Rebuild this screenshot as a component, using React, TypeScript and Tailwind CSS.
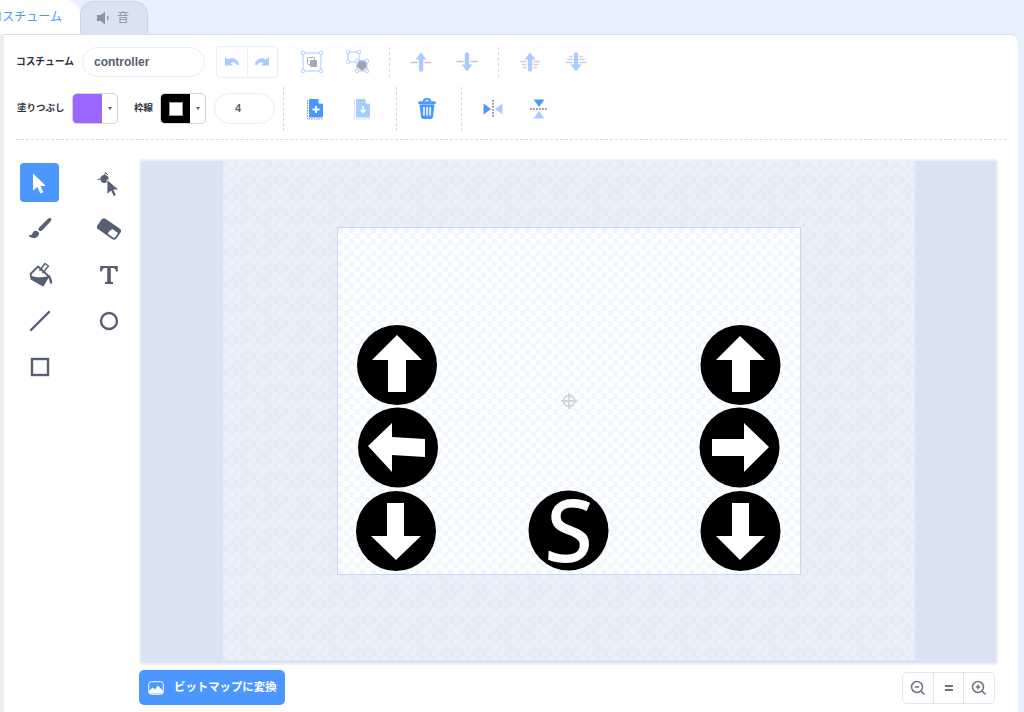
import React from 'react';

const jp = 'font-["Liberation_Sans","Noto_Sans_CJK_JP",sans-serif]';
const LIGHT = '#a9ccff';
const BLUE = '#4c97ff';
const GRAY = '#575e75';

const Cell: React.FC<{ children: React.ReactNode }> = ({ children }) => (
  <div className="w-[46px] h-[30px] flex items-center justify-center shrink-0">{children}</div>
);

const Divider: React.FC<{ tall?: boolean; className?: string }> = ({ tall, className }) => (
  <div className={`w-0 border-l border-dashed border-[#d9d9d9] shrink-0 ${tall ? 'h-[44px]' : 'h-[30px]'} ${className ?? ''}`} />
);

const Ico: React.FC<{ size?: number; children: React.ReactNode }> = ({ size = 24, children }) => (
  <svg width={size} height={size} viewBox="0 0 24 24" fill="none">{children}</svg>
);

const Handles: React.FC<{ pts: number[][] }> = ({ pts }) => (
  <>
    {pts.map(([x, y]) => (
      <rect key={`${x}-${y}`} x={x - 1.6} y={y - 1.6} width="3.2" height="3.2" rx="1" fill="#fff" stroke={LIGHT} strokeWidth="1" />
    ))}
  </>
);

const GroupIcon = () => (
  <Ico>
    <rect x="3" y="3" width="18" height="18" fill="none" stroke={LIGHT} strokeWidth="1" />
    <rect x="7.500" y="7.500" width="7" height="7" rx="1" fill="none" stroke="#a8abb6" strokeWidth="1" />
    <rect x="10" y="10" width="7" height="7" rx="1" fill="#a8abb6" />
    <Handles pts={[[3, 3], [21, 3], [3, 21], [21, 21]]} />
  </Ico>
);

const UngroupIcon = () => (
  <Ico>
    <rect x="2" y="2" width="11" height="10" fill="none" stroke={LIGHT} strokeWidth="1" />
    <path d="M10 16 14 10 20 11 21 17 16 21z" fill="#a0a3af" />
    <path d="M11 11h10v10H11z" fill="none" stroke={LIGHT} strokeWidth="1" />
    <Handles pts={[[2, 2], [13, 2], [2, 12], [11, 11], [21, 11], [11, 21], [21, 21]]} />
  </Ico>
);

const ArrowV: React.FC<{ down?: boolean; bars?: boolean }> = ({ down, bars }) => (
  <Ico>
    <g transform={down ? 'rotate(180 12 12)' : undefined}>
      {bars ? (
        <path d="M2 11.500h6.500M15.500 11.500h6.500M3.500 14.500h5M15.500 14.500h5M5 17.500h3.500M15.500 17.500h3.500" stroke="#cdcfd6" strokeWidth="1.300" />
      ) : (
        <path d="M1.500 12.500h7M15.500 12.500h7" stroke="#c4c6ce" strokeWidth="1.500" />
      )}
      <path d="M12 2.500 17.500 9.500h-3.300v10a2.200 2.200 0 0 1-4.400 0v-10H6.500z" fill={LIGHT} />
    </g>
  </Ico>
);

const FileIcon: React.FC<{ light?: boolean }> = ({ light }) => (
  <Ico>
    <path d="M4.500 3v19h15" stroke="#8e919e" strokeWidth="1" strokeDasharray="1.500 1" opacity={light ? 0.45 : 1} />
    <path d="M6 2h9.500L20 6.500v12.500a1.500 1.500 0 0 1-1.500 1.500H6z" fill={light ? LIGHT : BLUE} />
    <path d="M16 2v4.200h4.200" fill="#fff" stroke="#fff" strokeWidth="0.800" />
    {light ? (
      <path d="M13 9v6.500M10.500 13l2.500 2.500 2.500-2.500" stroke="#fff" strokeWidth="1.500" />
    ) : (
      <path d="M13 9v7M9.500 12.500h7" stroke="#fff" strokeWidth="1.800" />
    )}
  </Ico>
);

const TrashIcon = () => (
  <Ico>
    <path d="M8.500 4.500C8.500 2.500 10 2 12 2s3.500.5 3.500 2.500" stroke={BLUE} strokeWidth="1.800" />
    <rect x="3" y="4.200" width="18" height="3" rx="1.500" fill={BLUE} />
    <path d="M4.500 7.500h15L18 20a2.500 2.500 0 0 1-2.500 2h-7A2.500 2.500 0 0 1 6 20z" fill={BLUE} />
    <path d="M9 10v8.500M12 10v8.500M15 10v8.500" stroke="#fff" strokeWidth="1.500" />
  </Ico>
);

const FlipH = () => (
  <Ico>
    <path d="M12 3v18" stroke="#9a9da9" strokeWidth="2" strokeDasharray="1.800 1.200" />
    <path d="M2.500 6.500 10 12l-7.500 5.500z" fill={BLUE} />
    <path d="M21.500 6.500 14 12l7.500 5.500z" fill={LIGHT} />
  </Ico>
);

const FlipV = () => (
  <Ico>
    <path d="M3 12h18" stroke="#9a9da9" strokeWidth="2" strokeDasharray="1.800 1.200" />
    <path d="M6.500 2.500 12 10l5.500-7.500z" fill={BLUE} />
    <path d="M6.500 21.500 12 14l5.500 7.500z" fill={LIGHT} />
  </Ico>
);

const tools: React.ReactNode[] = [
  <svg key="select" width="22" height="24" viewBox="0 0 22 24"><path d="M4 2.500v17l4.300-3.500 3 6.500 3-1.300-2.900-6.300H17z" fill="#fff" /></svg>,
  <svg key="reshape" width="26" height="30" viewBox="0 0 26 30">
    <path d="M1.500 11.500 7 10.500 9.500 4.500 12 7" stroke={GRAY} strokeWidth="1" fill="none" />
    <circle cx="8.500" cy="11" r="4" fill={GRAY} />
    <path d="M11 11.500v15l4-3.500 2.600 5.500 2.700-1.200-2.500-5.400H23z" fill={GRAY} stroke="#fff" strokeWidth="0.800" />
  </svg>,
  <svg key="brush" width="26" height="26" viewBox="0 0 26 26">
    <path d="M24 2.500c.8.800.2 2-1 3.500l-8 8.500c-.8.800-2.200.8-3 0s-.8-2 0-2.800l8.500-8.500c1.300-1 2.700-1.500 3.500-.7z" fill={GRAY} />
    <path d="M7.500 15c2-1 4.500.5 4.500 2.800 0 2.500-3 4.700-6.500 4.200C3.500 21.700 2 20.500 1.500 19c1.500.5 3.500 0 4-1.500.3-1 .8-2 2-2.500z" fill={GRAY} />
  </svg>,
  <svg key="eraser" width="24" height="24" viewBox="0 0 26 26">
    <g transform="rotate(35 13 13)">
      <rect x="1.500" y="7" width="23" height="12" rx="2.500" fill="#fff" stroke={GRAY} strokeWidth="2" />
      <path d="M4 7h18a2.500 2.500 0 0 1 2.500 2.500V11h-8c-2 1.500-2 6.500-1.500 8H4a2.500 2.500 0 0 1-2.500-2.500v-7A2.500 2.500 0 0 1 4 7z" fill={GRAY} />
    </g>
  </svg>,
  <svg key="fill" width="26" height="26" viewBox="0 0 26 26">
    <path d="M3.500 12 11 4.500 21.500 14l-5.500 9.500L4.500 17z" fill="#fff" stroke={GRAY} strokeWidth="1.800" strokeLinejoin="round" />
    <path d="M3.500 13.500C8 15.500 15 16 21.500 14l-5.500 9.500L4.500 17z" fill={GRAY} />
    <path d="M12.500 9 18 1.500 21.500 4 15.500 11" stroke={GRAY} strokeWidth="1.500" fill="none" strokeLinejoin="round" />
    <path d="M22 14.500c1 1.500 1.700 3.500 2 6" stroke={GRAY} strokeWidth="2.400" strokeLinecap="round" fill="none" />
  </svg>,
  <svg key="text" width="20" height="20" viewBox="0 0 20 20"><path d="M1.200 1h17.600v5.500h-1.800C16.600 4 15.800 3 13.500 3h-1.700v13c0 .8.400 1 2.200 1.100V19H6v-1.900c1.800-.1 2.200-.3 2.200-1.100V3H6.500C4.200 3 3.400 4 3 6.500H1.200z" fill={GRAY} /></svg>,
  <svg key="line" width="22" height="22" viewBox="0 0 22 22"><path d="M2 20 20 2" stroke={GRAY} strokeWidth="2.400" strokeLinecap="round" /></svg>,
  <svg key="circle" width="20" height="20" viewBox="0 0 20 20"><circle cx="10" cy="10" r="8" fill="none" stroke={GRAY} strokeWidth="2.400" /></svg>,
  <svg key="rect" width="20" height="20" viewBox="0 0 20 20"><rect x="2" y="2" width="16" height="16" fill="none" stroke={GRAY} strokeWidth="2.400" /></svg>,
];

const Caret: React.FC = () => (
  <div className="w-[15px] flex items-center justify-center">
    <div className="w-0 h-0 border-x-[2.500px] border-x-transparent border-t-[3.500px] border-t-[#575e75]" />
  </div>
);

const App: React.FC = () => {
  return (
    <div className={`w-[1024px] h-[712px] overflow-hidden bg-[#e6f0ff] ${jp}`}>
      {/* tabs */}
      <div className="h-[34px] flex items-end relative z-10">
        <div className="w-[80px] h-[34px] bg-white rounded-tr-[14px] flex items-center justify-end pr-[18px] overflow-hidden">
          <span className="text-[12px] text-[#4c97ff] whitespace-nowrap">コスチューム</span>
        </div>
        <div className="w-[68px] h-[33px] bg-[#d9e3f2] border border-b-0 border-[#cbd6e8] rounded-t-[14px] flex items-center pl-[15px] gap-[4px] text-[12px] text-[#8d93a3]">
          <svg width="17" height="14" viewBox="0 0 17 14">
            <path d="M1 4h3.500L9 .5v13L4.500 10H1z" fill="#8d93a3" />
            <path d="M11.500 5c.7 1.200.7 2.800 0 4" stroke="#8d93a3" strokeWidth="1.400" fill="none" />
          </svg>
          <span>音</span>
        </div>
      </div>

      <div className="flex h-[678px]">
        <div className="w-[4px] bg-[#eeeeee] shrink-0" />
        {/* panel */}
        <div className="w-[1014px] h-full bg-white border-t border-[#d9dfe8] rounded-tr-[8px] pl-[12px] pt-[11px]">
          <div className="flex items-center h-[32px]">
            <span className="w-[66px] text-[9.700px] font-bold text-[#2f3340] whitespace-nowrap">コスチューム</span>
            <div className="w-[123px] h-[30px] rounded-full border border-[#e9eef2] flex items-center pl-[11px] text-[12px] font-bold text-[#575e75]">controller</div>
            <div className="ml-[11px] w-[62px] h-[32px] border border-[#e9eef2] rounded-[4px] flex">
              <div className="flex-1 border-r border-[#e9eef2] flex items-center justify-center">
                <svg width="16" height="12" viewBox="0 0 16 12"><path d="M1 1v8.500h8L6.500 7c2-1.300 4.500-.8 6 1.500.5.800 2.500 1 2.500-.5C14 3 8 .5 4.300 3.500z" fill={LIGHT} /></svg>
              </div>
              <div className="flex-1 flex items-center justify-center">
                <svg width="16" height="12" viewBox="0 0 16 12"><path d="M15 1v8.500H7L9.500 7c-2-1.300-4.500-.8-6 1.500C3 9.300 1 9.500 1 8 2 3 8 .5 11.700 3.500z" fill={LIGHT} /></svg>
              </div>
            </div>
            <div className="ml-[11px] flex"><Cell><GroupIcon /></Cell><Cell><UngroupIcon /></Cell></div>
            <Divider className="ml-[8px]" />
            <div className="ml-[8px] flex"><Cell><ArrowV /></Cell><Cell><ArrowV down /></Cell></div>
            <Divider className="ml-[8px]" />
            <div className="ml-[8px] flex"><Cell><ArrowV bars /></Cell><Cell><ArrowV bars down /></Cell></div>
          </div>

          <div className="flex items-center h-[31px] mt-[15px]">
            <span className="w-[56px] pl-[1px] text-[9.500px] font-bold text-[#2f3340] whitespace-nowrap">塗りつぶし</span>
            <div className="w-[46px] h-[31px] rounded-[5px] border border-[#d0d3da] flex overflow-hidden">
              <div className="flex-1 bg-[#9966ff]" />
              <Caret />
            </div>
            <span className="ml-[16px] w-[26px] text-[9.500px] font-bold text-[#2f3340] whitespace-nowrap">枠線</span>
            <div className="w-[46px] h-[31px] rounded-[5px] border border-[#d0d3da] flex overflow-hidden">
              <div className="flex-1 bg-black flex items-center justify-center">
                <div className="w-[14px] h-[14px] bg-white border border-[#9a9a9a]" />
              </div>
              <Caret />
            </div>
            <div className="ml-[8px] w-[61px] h-[31px] rounded-full border border-[#e9eef2] flex items-center justify-center text-[11px] font-bold text-[#575e75] pr-[13px]">4</div>
            <Divider tall className="ml-[8px]" />
            <div className="ml-[8px] flex gap-[1px]"><Cell><FileIcon /></Cell><Cell><FileIcon light /></Cell></div>
            <Divider tall className="ml-[11px]" />
            <div className="ml-[7px]"><Cell><TrashIcon /></Cell></div>
            <Divider tall className="ml-[11px]" />
            <div className="ml-[8px] flex"><Cell><FlipH /></Cell><Cell><FlipV /></Cell></div>
          </div>

          <div className="mt-[15px] w-[991px] border-t border-dashed border-[#d9d9d9]" />

          {/* tools + canvas */}
          <div className="flex mt-[19px]">
            <div className="w-[123px] pl-[4px] pt-[4px] shrink-0">
              <div className="grid grid-cols-[39px_39px] auto-rows-[39px] gap-x-[30px] gap-y-[7px]">
                {tools.map((t, i) => (
                  <div key={i} className={`flex items-center justify-center rounded-[4px] ${i === 0 ? 'bg-[#4c97ff]' : ''}`}>{t}</div>
                ))}
              </div>
            </div>

            <div className="shrink-0">
              <div className="w-[859px] h-[506px] border-2 border-[#edf1f7] rounded-[3px] bg-[#d9e3f2] overflow-hidden flex">
                <div className="ml-[82px] w-[692px] h-[499px] pl-[114px] pt-[66px] bg-[#e6edf7] bg-[conic-gradient(#eaf0f9_25%,#e5ecf6_0_50%,#eaf0f9_0_75%,#e5ecf6_0)] bg-size-[11px_11px]">
                  <div className="relative w-[464px] h-[348px] border border-[#c9d7f2] bg-white bg-[conic-gradient(#ffffff_25%,#f2f6fd_0_50%,#ffffff_0_75%,#f2f6fd_0)] bg-size-[11px_11px]">
                    <svg className="absolute -left-px -top-px" width="464" height="348" viewBox="337 227 464 348">
                      <g fill="#000">
                        <circle cx="397" cy="365" r="40" />
                        <circle cx="398" cy="447.500" r="40" />
                        <circle cx="396" cy="531" r="40" />
                        <circle cx="568.500" cy="530.500" r="40" />
                        <circle cx="740.500" cy="365" r="40" />
                        <circle cx="739.500" cy="447.500" r="40" />
                        <circle cx="740.500" cy="531" r="40" />
                      </g>
                      <g fill="#fff">
                        <path d="M397 335 422 360H406V392H388V360H372Z" />
                        <path d="M368 446 392 423V437L425 439V457L392 455V472Z" />
                        <path d="M387 503H404V536H421L396 560 371 536H387Z" />
                        <path d="M740 336 765 360H750V392H732V360H716Z" />
                        <path d="M769 447 744 423V439H712V456H744V472Z" />
                        <path d="M732 503H749V536H765L740 560 716 536H732Z" />
                      </g>
                      <text x="568.500" y="561" textAnchor="middle" fill="#fff" stroke="#fff" strokeWidth="2.200" fontFamily="'Open Sans', sans-serif" fontSize="84" transform="skewX(-3) translate(29 0)">S</text>
                      <g stroke="#d2d4da" fill="none" strokeWidth="1.800">
                        <circle cx="569" cy="401" r="5.500" />
                        <path d="M569 393v16M561 401h16" />
                      </g>
                    </svg>
                  </div>
                </div>
              </div>

              <div className="mt-[5px] flex items-start justify-between w-[856px]">
                <div className="w-[146px] h-[35px] rounded-[5px] bg-[#4c97ff] flex items-center pl-[9px] gap-[10px]">
                  <svg width="16" height="14" viewBox="0 0 16 14" fill="none">
                    <rect x="0.750" y="0.750" width="14.500" height="12.500" rx="2.500" stroke="#fff" strokeWidth="1" />
                    <path d="M1 12.500V10l3.500-3.500 2.500 2 3-4 5 5.500v2.500z" fill="#fff" />
                  </svg>
                  <span className="text-[11.400px] font-bold text-white whitespace-nowrap">ビットマップに変換</span>
                </div>
                <div className="mt-[2px] w-[93px] h-[32px] border border-[#e3e5e9] rounded-[5px] flex">
                  <div className="flex-1 flex items-center justify-center border-r border-[#e3e5e9]">
                    <svg width="16" height="16" viewBox="0 0 16 16" fill="none" stroke="#6e7487" strokeWidth="1.500"><circle cx="7" cy="7" r="5.500" /><path d="M4.800 7h4.400M11 11l3.500 3.500" /></svg>
                  </div>
                  <div className="flex-1 flex items-center justify-center border-r border-[#e3e5e9]">
                    <svg width="12" height="10" viewBox="0 0 12 10" fill="none" stroke="#6e7487" strokeWidth="1.800"><path d="M2 3h8M2 7h8" /></svg>
                  </div>
                  <div className="flex-1 flex items-center justify-center">
                    <svg width="16" height="16" viewBox="0 0 16 16" fill="none" stroke="#6e7487" strokeWidth="1.500"><circle cx="7" cy="7" r="5.500" /><path d="M4.800 7h4.400M7 4.800v4.400M11 11l3.500 3.500" /></svg>
                  </div>
                </div>
              </div>
            </div>
          </div>
        </div>
      </div>
    </div>
  );
};

export default App;
